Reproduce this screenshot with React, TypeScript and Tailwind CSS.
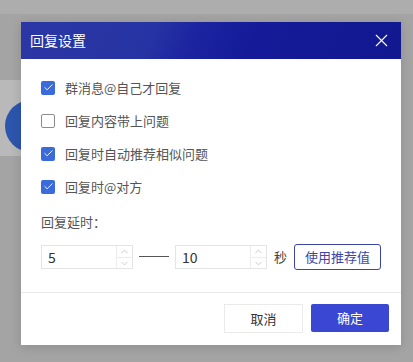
import React from 'react';
import { ChevronUp, ChevronDown, X, Check } from 'lucide-react';

const options = [
    { label: '群消息@自己才回复', checked: true },
    { label: '回复内容带上问题', checked: false },
    { label: '回复时自动推荐相似问题', checked: true },
    { label: '回复时@对方', checked: true },
];

function NumberInput({ value }: { value: string }) {
    return (
        <div className="w-[92px] h-[24px] flex border border-[#e4e4e4] bg-white">
            <div className="flex-1 pl-[6px] text-[14px] leading-[22px] text-[#333]">{value}</div>
            <div className="w-[16px] flex flex-col border-l border-[#ececec]">
                <div className="flex-1 flex items-center justify-center border-b border-[#ececec]">
                    <ChevronUp className="w-[11px] h-[11px] text-[#b5b5b5]" strokeWidth={1.5} />
                </div>
                <div className="flex-1 flex items-center justify-center">
                    <ChevronDown className="w-[11px] h-[11px] text-[#b5b5b5]" strokeWidth={1.5} />
                </div>
            </div>
        </div>
    );
}

export default function App() {
    return (
        <div className="relative w-[413px] h-[362px] bg-[#a4a4a4] overflow-hidden" style={{ fontFamily: '"Noto Sans CJK SC", "Noto Sans", sans-serif' }}>
            <div className="absolute left-0 top-0 w-[413px] h-[14px] bg-[#adadad]" />
            <div className="absolute left-0 top-[80px] w-[24px] h-[76px] bg-[#b9b9b9]">
                <div className="absolute left-[5px] top-[20px] w-[52px] h-[52px] rounded-full bg-[#2c55ad]" />
            </div>

            <div className="absolute left-[21px] top-[22px] w-[380px] h-[323px] bg-white flex flex-col shadow-[0_2px_10px_rgba(0,0,0,0.15)]">
                <div className="h-[37px] flex items-center justify-between px-[9px] bg-[linear-gradient(115deg,#2a37a4_0%,#2633a2_35%,#1c24a0_45%,#151b98_60%,#12188f_100%)]">
                    <span className="text-white text-[14px]">回复设置</span>
                    <X className="w-[21px] h-[21px] text-white" strokeWidth={1.3} />
                </div>

                <div className="flex-1 px-[20px] pt-[20px]">
                    <div className="flex flex-col gap-[16px]">
                        {options.map((o) => (
                            <div key={o.label} className="flex items-center h-[17px]">
                                {o.checked ? (
                                    <div className="w-[14px] h-[14px] rounded-[2px] bg-[#3b6bdb] flex items-center justify-center">
                                        <Check className="w-[11px] h-[11px] text-white" strokeWidth={2} />
                                    </div>
                                ) : (
                                    <div className="w-[14px] h-[14px] rounded-[2px] border border-[#8c8c8c] bg-white" />
                                )}
                                <span className="ml-[10px] text-[13px] text-[#555]">{o.label}</span>
                            </div>
                        ))}
                    </div>
                    <div className="mt-[17px] text-[13px] text-[#555]">回复延时：</div>
                    <div className="mt-[12px] flex items-center">
                        <NumberInput value="5" />
                        <div className="w-[30px] h-px bg-[#555] mx-[6px]" />
                        <NumberInput value="10" />
                        <span className="ml-[7px] text-[13px] text-[#444]">秒</span>
                        <button className="ml-[7px] w-[87px] h-[26px] rounded-[3px] border border-[#3c45a6] text-[13px] text-[#3c45a6] bg-white">使用推荐值</button>
                    </div>
                </div>

                <div className="border-t border-[#e8e8e8] h-[53px] flex items-start justify-end gap-[8px] pt-[11px] pr-[12px]">
                    <button className="w-[79px] h-[29px] border border-[#eaeaea] bg-white text-[13px] text-[#333]">取消</button>
                    <button className="w-[78px] h-[28px] rounded-[2px] bg-[#3a47d3] text-[13px] text-white">确定</button>
                </div>
            </div>
        </div>
    );
}
